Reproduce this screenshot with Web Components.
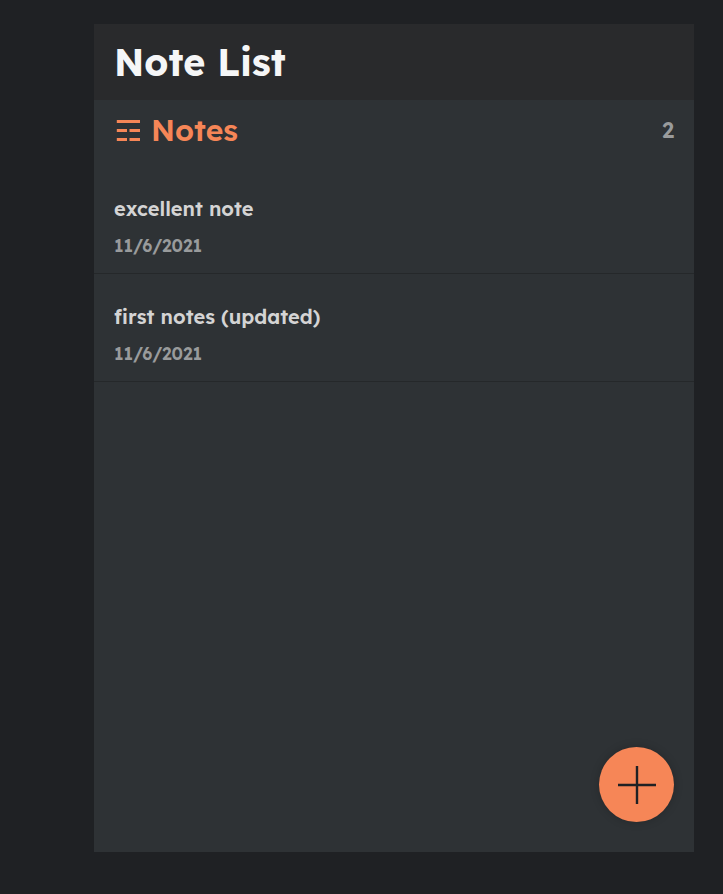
<!DOCTYPE html>
<html lang="en"><head><meta charset="utf-8"><title>Note List</title>
<style>
html,body{margin:0;background:#1f2124}
body{box-sizing:border-box;height:894px;padding:24px 29px 42px 94px;display:flex;overflow:hidden;font-family:Lexend,Inter,"Open Sans",sans-serif;font-weight:600}
</style></head><body>
<notes-app>
  <app-header slot="header">Note List</app-header>
  <notes-heading count="2">Notes</notes-heading>
  <note-item date="11/6/2021">excellent note</note-item>
  <note-item date="11/6/2021">first notes (updated)</note-item>
  <add-button slot="action"></add-button>
</notes-app>
<script>
const define = (name, html, setup) => customElements.define(name, class extends HTMLElement {
  constructor() {
    super();
    this.attachShadow({mode: 'open'}).innerHTML = html;
  }
  connectedCallback() { if (setup) setup(this, this.shadowRoot); }
});

define('notes-app', `<style>
:host{display:flex;flex-direction:column;flex:1;position:relative;background:#2e3235}
main{flex:1}
.action{position:absolute;right:20px;bottom:30px}
</style><slot name="header"></slot><main><slot></slot></main><div class="action"><slot name="action"></slot></div>`);

define('app-header', `<style>
:host{display:block;height:76px;background:#292a2c}
h1{margin:0;padding:0 0 0 20px;font-size:37.600px;line-height:76px;font-weight:700;color:#f5f6f7}
</style><h1><slot></slot></h1>`);

define('notes-heading', `<style>
:host{display:flex;align-items:center;height:61px;padding:0 20px 0 22px;box-sizing:border-box}
svg{display:block;width:25px;height:24px;margin-right:10px}
h2{margin:0;flex:1;font-size:30px;line-height:61px;font-weight:650;color:#f68657}
span{font-size:22px;line-height:60px;align-self:flex-start;color:#999b9c}
</style><svg viewBox="0 0 25 24" fill="#f68657"><path d="M.8 1H24v3H.8zM.8 10H11v3H.8zM13.500 10H24v3H13.500zM.8 19H11v3H.8zM13.500 19H24v3H13.500z"/></svg><h2><slot></slot></h2><span></span>`,
(el, root) => root.querySelector('span').textContent = el.getAttribute('count'));

define('note-item', `<style>
:host{display:block;height:108px;box-sizing:border-box;padding:30px 20px 0;border-bottom:1px solid #25282a}
:host(:first-of-type){height:113px;padding-top:35px}
h3{margin:0;font-size:20px;line-height:25px;font-weight:620;color:#d4d4d4}
p{margin:14px 0 0;font-size:17.500px;line-height:20px;color:#999b9c}
</style><h3><slot></slot></h3><p></p>`,
(el, root) => root.querySelector('p').textContent = el.getAttribute('date'));

define('add-button', `<style>
:host{display:block}
button{display:grid;place-items:center;width:75px;height:75px;padding:0;border:0;border-radius:50%;background:#f68657;box-shadow:0 0 10px rgba(0,0,0,.2)}
svg{display:block;width:75px;height:75px}
</style><button aria-label="Add note"><svg viewBox="0 0 75 75" stroke="#1f2124" stroke-width="2.4"><path d="M19 38H57M38 19V57"/></svg></button>`);
</script></body></html>
